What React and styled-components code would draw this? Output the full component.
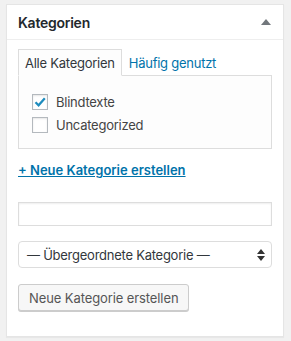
import React, { useState } from 'react';
import styled, { createGlobalStyle } from 'styled-components';

const GlobalStyle = createGlobalStyle`
  html, body {
    margin: 0;
    background: #f1f1f1;
  }
  body {
    font-family: 'Inter', 'Liberation Sans', sans-serif;
    font-size: 13px;
    letter-spacing: -0.25px;
    color: #444;
  }
`;

const Page = styled.div`
  padding: 4px 7px 5px 6px;
`;

const Box = styled.div`
  background: #fff;
  border: 1px solid #e5e5e5;
  box-shadow: 0 1px 1px rgba(0, 0, 0, 0.04);
`;

const Header = styled.div`
  display: flex;
  align-items: center;
  justify-content: space-between;
  height: 34px;
  padding: 0 12px 0 11px;
  border-bottom: 1px solid #eee;
`;

const Title = styled.h2`
  margin: 0;
  font-size: 14px;
  font-weight: 600;
  color: #23282d;
`;

const Toggle = styled.span`
  width: 0;
  height: 0;
  border-left: 5px solid transparent;
  border-right: 5px solid transparent;
  border-bottom: 6px solid #72777c;
`;

const Inside = styled.div`
  padding: 9px 11px 25px 11px;
`;

const Tabs = styled.ul`
  display: flex;
  align-items: flex-end;
  margin: 0;
  padding: 0;
  list-style: none;
`;

const Tab = styled.li`
  padding: 6px 6px 5px;
  margin-bottom: -1px;
  border: 1px solid ${({ active }) => (active ? '#ddd' : 'transparent')};
  border-bottom-color: ${({ active }) => (active ? '#fdfdfd' : 'transparent')};
  background: ${({ active }) => (active ? '#fdfdfd' : 'transparent')};
  color: ${({ active }) => (active ? '#32373c' : '#0073aa')};
  position: relative;
  line-height: 14px;
  cursor: pointer;
`;

const TabPanel = styled.div`
  border: 1px solid #ddd;
  background: #fdfdfd;
  padding: 18px 13px 15px;
  display: flex;
  flex-direction: column;
  gap: 7px;
`;

const CheckRow = styled.label`
  display: flex;
  align-items: center;
  gap: 8px;
  color: #444;
  line-height: 16px;
`;

const Check = styled.span`
  width: 14px;
  height: 14px;
  border: 1px solid #b4b9be;
  background: #fff;
  box-shadow: inset 0 1px 2px rgba(0, 0, 0, 0.1);
  display: flex;
  align-items: center;
  justify-content: center;
`;

const AddLink = styled.a`
  display: inline-block;
  margin-top: 13px;
  color: #0073aa;
  font-weight: 600;
  letter-spacing: 0;
  text-decoration: underline;
  cursor: pointer;
`;

const Form = styled.div`
  display: flex;
  flex-direction: column;
  align-items: flex-start;
  margin-top: 24px;
  gap: 15px;
`;

const TextInput = styled.input`
  box-sizing: border-box;
  width: 100%;
  height: 24px;
  border: 1px solid #ddd;
  box-shadow: inset 0 1px 2px rgba(0, 0, 0, 0.07);
  background: #fff;
`;

const Select = styled.div`
  box-sizing: border-box;
  width: 100%;
  height: 27px;
  display: flex;
  align-items: center;
  justify-content: space-between;
  padding: 0 6px 0 8px;
  border: 1px solid #ddd;
  border-radius: 4px;
  background: #fff;
  color: #32373c;
  font-size: 13px;
`;

const Button = styled.button`
  box-sizing: border-box;
  height: 27px;
  padding: 0 10px;
  font-family: inherit;
  font-size: 13px;
  letter-spacing: -0.1px;
  color: #555;
  background: #f7f7f7;
  border: 1px solid #ccc;
  border-radius: 3px;
  box-shadow: 0 1px 0 #ccc;
  margin-top: 1px;
`;

const categories = [
  { name: 'Blindtexte', checked: true },
  { name: 'Uncategorized', checked: false },
];

export default function App() {
  const [tab, setTab] = useState(0);
  return (
    <>
      <GlobalStyle />
      <Page>
        <Box>
          <Header>
            <Title>Kategorien</Title>
            <Toggle />
          </Header>
          <Inside>
            <Tabs>
              <Tab active={tab === 0} onClick={() => setTab(0)}>Alle Kategorien</Tab>
              <Tab active={tab === 1} onClick={() => setTab(1)}>Häufig genutzt</Tab>
            </Tabs>
            <TabPanel>
              {categories.map((c) => (
                <CheckRow key={c.name}>
                  <Check>
                    {c.checked && (
                      <svg width="14" height="14" viewBox="0 0 14 14">
                        <path d="M2.5 7.2 L5.6 10.3 L11.8 3.2" fill="none" stroke="#1e8cbe" strokeWidth="2.2" />
                      </svg>
                    )}
                  </Check>
                  {c.name}
                </CheckRow>
              ))}
            </TabPanel>
            <AddLink>+ Neue Kategorie erstellen</AddLink>
            <Form>
              <TextInput />
              <Select>
                <span>— Übergeordnete Kategorie —</span>
                <svg width="8" height="12" viewBox="0 0 8 12">
                  <path d="M4 0 L8 5 L0 5 Z M0 7 L8 7 L4 12 Z" fill="#333" />
                </svg>
              </Select>
              <Button>Neue Kategorie erstellen</Button>
            </Form>
          </Inside>
        </Box>
      </Page>
    </>
  );
}
